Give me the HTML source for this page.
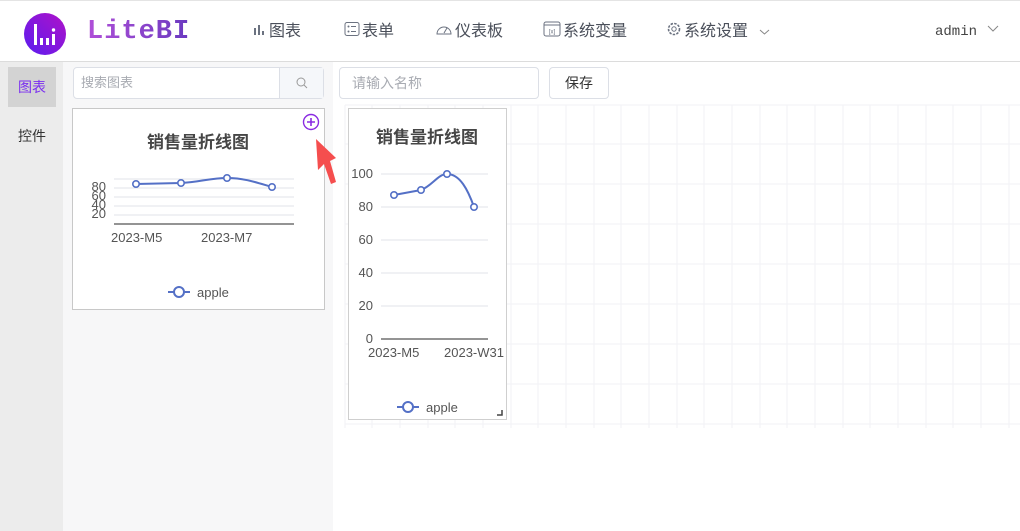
<!DOCTYPE html>
<html><head><meta charset="utf-8"><style>
*{margin:0;padding:0;box-sizing:border-box}
body{width:1020px;height:531px;overflow:hidden;background:#fff;font-family:"Liberation Sans","Noto Sans CJK SC",sans-serif;position:relative;color:#333}
.hdr{position:absolute;left:0;top:0;width:1020px;height:62px;border-top:1px solid #e4e4e4;border-bottom:1px solid #dcdcdc;background:#fff}
.nav{position:absolute;top:16px;font-size:16px;color:#4a4f5a;display:flex;align-items:center;gap:2px}
.abs{position:absolute}
.side{position:absolute;left:0;top:62px;width:63px;height:469px;background:#ececec}
.panel{position:absolute;left:63px;top:62px;width:270px;height:469px;background:#f7f7f8}
.inp{position:absolute;border:1px solid #dcdfe6;border-radius:4px;background:#fff;font-size:13px;color:#a8abb2}
</style></head><body>
<div class="hdr">
<svg class="abs" style="left:24px;top:12px" width="42" height="42" viewBox="0 0 42 42"><defs><linearGradient id="g" x1="1" y1="0" x2="0" y2="1"><stop offset="0" stop-color="#b012c8"/><stop offset="1" stop-color="#5a1cf0"/></linearGradient></defs><circle cx="21" cy="21" r="21" fill="url(#g)"/><rect x="10" y="11" width="3" height="21" fill="#fff"/><rect x="16" y="25" width="3" height="7" fill="#fff"/><rect x="22" y="25" width="3" height="7" fill="#fff"/><rect x="28" y="21" width="3" height="11" fill="#fff"/><circle cx="29.5" cy="17" r="1.7" fill="#fff"/></svg>
<div class="abs" style="left:87px;top:16px;font-family:'Liberation Mono',monospace;font-size:27px;font-weight:bold;letter-spacing:1px;background:linear-gradient(90deg,#b04fd8,#6a3ac0);-webkit-background-clip:text;color:transparent">LiteBI</div>
<div class="nav" style="left:253px"><svg width="14" height="14"><rect x="1" y="6" width="2" height="7" fill="#6b7280"/><rect x="5" y="3" width="2" height="10" fill="#6b7280"/><rect x="9" y="9" width="2" height="4" fill="#6b7280"/></svg>图表</div>
<div class="nav" style="left:344px"><svg width="16" height="16"><rect x="1" y="1.5" width="14" height="13" rx="2" fill="none" stroke="#6b7280"/><circle cx="4.5" cy="5.5" r="1" fill="#6b7280"/><circle cx="4.5" cy="10.5" r="1" fill="#6b7280"/><line x1="7" y1="5.5" x2="12" y2="5.5" stroke="#6b7280"/><line x1="7" y1="10.5" x2="12" y2="10.5" stroke="#6b7280"/></svg>表单</div>
<div class="nav" style="left:435px"><svg width="18" height="16"><path d="M2 13A7 7 0 1 1 16 13Z" fill="none" stroke="#6b7280"/><line x1="9" y1="12" x2="12" y2="7" stroke="#6b7280"/></svg>仪表板</div>
<div class="nav" style="left:543px"><svg width="18" height="16"><rect x="1" y="1" width="16" height="14" rx="2" fill="none" stroke="#6b7280"/><line x1="1" y1="4" x2="17" y2="4" stroke="#6b7280"/><text x="9" y="12.5" font-size="6" text-anchor="middle" fill="#6b7280">[x]</text></svg>系统变量</div>
<div class="nav" style="left:666px"><svg width="16" height="16"><circle cx="8" cy="8" r="5.5" fill="none" stroke="#6b7280" stroke-width="1.6" stroke-dasharray="2.5 1.2"/><circle cx="8" cy="8" r="2.2" fill="none" stroke="#6b7280"/></svg>系统设置</div>
<svg class="abs" style="left:759px;top:28px" width="11" height="7"><path d="M1 1L5.5 5L10 1" fill="none" stroke="#888"/></svg>
<div class="abs" style="left:935px;top:23px;font-family:'Liberation Mono',monospace;font-size:14px;color:#444">admin</div>
<svg class="abs" style="left:987px;top:24px" width="12" height="8"><path d="M1 1L6 6L11 1" fill="none" stroke="#888"/></svg>
</div>
<div class="side"></div>
<div class="abs" style="left:8px;top:67px;width:48px;height:40px;background:#d3d3d3;color:#7b2ff0;font-size:14px;text-align:center;line-height:40px">图表</div>
<div class="abs" style="left:8px;top:116px;width:48px;height:40px;color:#333;font-size:14px;text-align:center;line-height:40px">控件</div>
<div class="panel"></div>
<div class="inp" style="left:73px;top:67px;width:251px;height:32px;padding-left:7px;line-height:30px">搜索图表<div class="abs" style="right:0;top:0;width:44px;height:30px;background:#f5f7fa;border-left:1px solid #dcdfe6"><svg class="abs" style="left:16px;top:9px" width="12" height="12"><circle cx="5" cy="5" r="4" fill="none" stroke="#999"/><line x1="8" y1="8" x2="11" y2="11" stroke="#999"/></svg></div></div>
<div class="inp" style="left:339px;top:67px;width:200px;height:32px;padding-left:12px;line-height:30px;font-size:14px">请输入名称</div>
<div class="inp" style="left:549px;top:67px;width:60px;height:32px;text-align:center;line-height:30px;font-size:14px;color:#333">保存</div>
<svg class="abs" style="left:0;top:0" width="1020" height="531">
<g stroke="#f2f2f5" stroke-width="1">
<path d="M345 105V428M372 105V428M400 105V428M428 105V428M455 105V428M483 105V428M511 105V428M538 105V428M566 105V428M594 105V428M621 105V428M649 105V428M677 105V428M704 105V428M732 105V428M760 105V428M787 105V428M815 105V428M843 105V428M870 105V428M898 105V428M926 105V428M953 105V428M981 105V428M1009 105V428"/>
<path d="M345 105H1020M345 144H1020M345 184H1020M345 224H1020M345 264H1020M345 304H1020M345 344H1020M345 384H1020M345 424H1020"/>
</g>
<rect x="72.5" y="108.5" width="252" height="201" fill="#fff" stroke="#c8c8c8"/>
<text x="198" y="148" text-anchor="middle" font-size="17" font-weight="bold" fill="#464646" font-family="Liberation Sans,Noto Sans CJK SC,sans-serif">销售量折线图</text>
<g stroke="#e0e3ea"><path d="M114 179H294M114 188H294M114 197H294M114 206H294M114 215H294"/></g>
<path d="M114 224H294" stroke="#555" stroke-width="1.3"/>
<g font-size="13" fill="#555" text-anchor="end"><text x="106" y="191">80</text><text x="106" y="200">60</text><text x="106" y="209">40</text><text x="106" y="218">20</text></g>
<g font-size="13" fill="#555"><text x="111" y="242">2023-M5</text><text x="201" y="242">2023-M7</text></g>
<path d="M136 184L181 183C200 182 210 178 227 178C245 178 258 183 272 187" fill="none" stroke="#5470c6" stroke-width="2"/>
<g fill="#fff" stroke="#5470c6" stroke-width="1.6"><circle cx="136" cy="184" r="3.2"/><circle cx="181" cy="183" r="3.2"/><circle cx="227" cy="178" r="3.2"/><circle cx="272" cy="187" r="3.2"/></g>
<path d="M168 292H190" stroke="#5470c6" stroke-width="2"/><circle cx="179" cy="292" r="5" fill="#fff" stroke="#5470c6" stroke-width="2"/>
<text x="197" y="297" font-size="13" fill="#555">apple</text>
<circle cx="311" cy="122" r="7.5" fill="none" stroke="#8a2be2" stroke-width="1.4"/><path d="M307 122H315M311 118V126" stroke="#8a2be2" stroke-width="1.6"/>
<polygon points="316,139 336,158 330,161 336,182 331,184 324,164 318,170" fill="#f54e4e"/>
<rect x="348.5" y="108.5" width="158" height="311" fill="#fff" stroke="#cfcfcf"/>
<text x="427" y="143" text-anchor="middle" font-size="17" font-weight="bold" fill="#464646" font-family="Liberation Sans,Noto Sans CJK SC,sans-serif">销售量折线图</text>
<g stroke="#e0e3ea"><path d="M381 174H488M381 207H488M381 240H488M381 273H488M381 306H488"/></g>
<path d="M381 339H488" stroke="#555" stroke-width="1.3"/>
<g font-size="13" fill="#555" text-anchor="end"><text x="373" y="178">100</text><text x="373" y="211">80</text><text x="373" y="244">60</text><text x="373" y="277">40</text><text x="373" y="310">20</text><text x="373" y="343">0</text></g>
<g font-size="13" fill="#555"><text x="368" y="357">2023-M5</text><text x="444" y="357">2023-W31</text></g>
<path d="M394 195L421 190C432 186 438 174 447 174C460 174 468 190 474 207" fill="none" stroke="#5470c6" stroke-width="2"/>
<g fill="#fff" stroke="#5470c6" stroke-width="1.6"><circle cx="394" cy="195" r="3.2"/><circle cx="421" cy="190" r="3.2"/><circle cx="447" cy="174" r="3.2"/><circle cx="474" cy="207" r="3.2"/></g>
<path d="M397 407H419" stroke="#5470c6" stroke-width="2"/><circle cx="408" cy="407" r="5" fill="#fff" stroke="#5470c6" stroke-width="2"/>
<text x="426" y="412" font-size="13" fill="#555">apple</text>
<path d="M497 415H502V410" fill="none" stroke="#444" stroke-width="1.5"/>
</svg>
</body></html>
